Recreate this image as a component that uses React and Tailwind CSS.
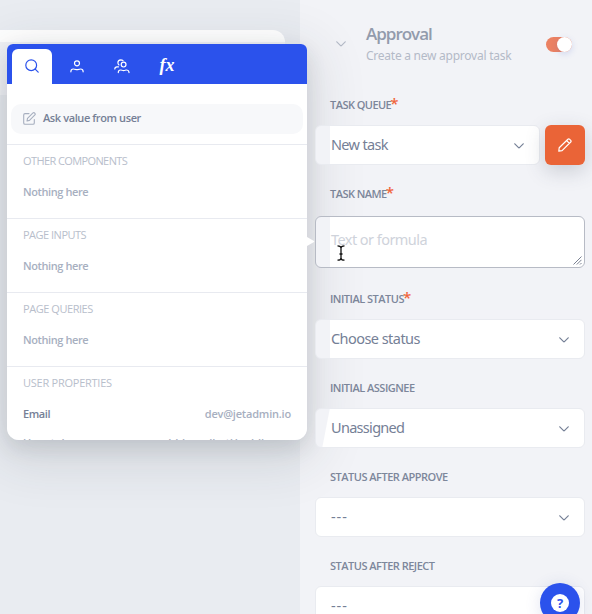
import React from 'react';

function Chevron({ className = '' }) {
  return (
    <svg className={className} width="10" height="6" viewBox="0 0 10 6" fill="none" stroke="currentColor" strokeWidth="1.2" strokeLinecap="round" strokeLinejoin="round">
      <path d="M.8.8 4.3 4.4Q5 5.1 5.7 4.4L9.2.8" />
    </svg>
  );
}

function Label({ children, required, className = '' }) {
  return (
    <div className={"ml-[15px] flex h-[18px] items-center whitespace-nowrap font-['Open_Sans',sans-serif] text-[11px] font-semibold text-[#7d879b] " + className}>
      {children}
      {required && <span className="-ml-px -mt-1 text-[15px] font-semibold leading-none tracking-normal text-[#f0653c]">*</span>}
    </div>
  );
}

const tinted = 'bg-[linear-gradient(to_right,#f2f3f7_14px,#ffffff_14px)]';

function Select({ children, fill = tinted, className = '' }) {
  return (
    <div className={'relative z-20 flex h-10 min-w-0 flex-1 items-center justify-between rounded-md border border-[#e9ebf0] pl-[15px] pr-[15px] text-[14.5px] text-[#758096] ' + fill}>
      <span className={'-mt-px whitespace-nowrap ' + className}>{children}</span>
      <Chevron className="mt-0.5" />
    </div>
  );
}

function Field({ label, labelClass, required, children }) {
  return (
    <div className="mb-5">
      <Label required={required} className={labelClass}>{label}</Label>
      <div className="mt-[11px] flex gap-[5px]">{children}</div>
    </div>
  );
}

function Group({ title, titleClass, children }) {
  return (
    <div className="h-[74px] shrink-0 border-t border-[#e8eaf0] px-4 pt-2">
      <div className={"h-4 whitespace-nowrap font-['Open_Sans',sans-serif] text-[11px] font-medium leading-4 text-[#b8becb] " + titleClass}>{title}</div>
      <div className="mt-[15px] flex h-4 items-center justify-between whitespace-nowrap font-['Open_Sans',sans-serif] text-[11px] font-semibold leading-4 tracking-[-0.4px] text-[#a7afbf]">
        {children}
      </div>
    </div>
  );
}

function Tabs() {
  return (
    <div className="flex h-10 shrink-0 items-end bg-[#2b52ec] pl-[5px] text-white">
      <div className="flex h-[35px] w-10 items-center justify-center rounded-t-md bg-white pb-0.5 text-[#2b52ec]">
        <svg width="14" height="14" viewBox="0 0 14 14" fill="none" stroke="currentColor" strokeWidth="1.2" strokeLinecap="round">
          <circle cx="6.2" cy="6.2" r="5.4" />
          <path d="m10.2 10.2 3 3" />
        </svg>
      </div>
      <div className="flex h-[35px] w-[50px] items-center justify-center">
        <svg width="14" height="13" viewBox="0 0 14 13" fill="none" stroke="currentColor" strokeWidth="1.2" strokeLinecap="round">
          <circle cx="7" cy="3.3" r="2.5" />
          <path d="M.9 11.8v-.5Q1.1 9 3.2 9 4.8 9 5.5 9.4q1.5.6 3 0Q9.2 9 10.8 9q2.1 0 2.3 2.3v.5" />
        </svg>
      </div>
      <div className="flex h-[35px] w-10 items-center justify-center">
        <svg width="16" height="15" viewBox="0 0 16 15" fill="none" stroke="currentColor" strokeWidth="1.2" strokeLinecap="round">
          <circle cx="9.6" cy="5.6" r="2.4" />
          <path d="M4.3 13.6v-.4q.2-2.2 2.1-2.2 1.2 0 1.8.3 1.4.5 2.8 0 .6-.3 1.8-.3 1.9 0 2.2 2.2v.4" />
          <path d="M9 1.7Q8.3.8 6.7.8 3.9 1 3.9 3.8q0 1.4 1.1 2.1M.8 10q.1-2.1 2.2-2.2h1.5" />
        </svg>
      </div>
      <div className="flex h-[35px] w-[50px] items-center justify-center pb-1 font-['Liberation_Serif',serif] text-[18px] font-bold italic leading-none">
        fx
      </div>
    </div>
  );
}

function Popover() {
  return (
    <div className="absolute left-[7px] top-11 z-10 h-[396px] w-[300px] rounded-b-xl rounded-t-md shadow-[0_12px_52px_10px_rgba(45,50,60,0.12),0_8px_20px_rgba(45,50,60,0.12)]">
      <div className="flex h-full flex-col overflow-hidden rounded-b-xl rounded-t-md bg-white">
        <Tabs />
        <div className="mx-1 mb-[10px] mt-5 flex h-[30px] shrink-0 items-center rounded-[10px] bg-[#f7f8fa] pb-px pl-3 font-['Open_Sans',sans-serif] text-[11px] font-semibold text-[#758096]">
          <svg width="13" height="13" viewBox="0 0 13 13" fill="none" stroke="#a7afbf" strokeWidth="1.1" strokeLinejoin="round" strokeLinecap="round">
            <path d="M6 1.6H2Q.7 1.6.7 3v8q0 1.3 1.3 1.3h8q1.3 0 1.3-1.3V7.5" />
            <path d="m4 9 .5-2.6L10 .9q.8-.6 1.6.1l.3.4q.7.8 0 1.5L6.5 8.4 4 9Z" />
          </svg>
          <span className="ml-[7px] whitespace-nowrap tracking-[-0.4px]">Ask value from user</span>
        </div>
        <Group title="OTHER COMPONENTS" titleClass="tracking-[-0.6px]">Nothing here</Group>
        <Group title="PAGE INPUTS" titleClass="tracking-[-0.5px]">Nothing here</Group>
        <Group title="PAGE QUERIES" titleClass="tracking-[-0.45px]">Nothing here</Group>
        <Group title="USER PROPERTIES" titleClass="tracking-[-0.25px]">
          <span className="text-[#758096]">Email</span>
          <span className="tracking-[-0.2px]">dev@jetadmin.io</span>
        </Group>
        <div className="-mt-[9px] flex h-4 shrink-0 justify-between whitespace-nowrap px-4 pt-1 font-['Open_Sans',sans-serif] text-[11px] font-semibold leading-4 text-[#a7afbf]">
          <span>User token</span>
          <span className="mr-4">a edddmn dbetHe ddhn</span>
        </div>
      </div>
      <svg className="absolute left-full top-[193px]" width="8" height="9" viewBox="0 0 8 9">
        <path d="M0 0 7 4Q7.6 4.5 7 5L0 9Z" fill="#fff" />
      </svg>
    </div>
  );
}

export default function App() {
  return (
    <div className="relative flex h-[614px] w-[592px] overflow-hidden bg-[#e9ecf1] font-['Noto_Sans','Open_Sans',sans-serif]">
      <div className="w-[300px] shrink-0 pt-[30px]">
        <div className="relative z-10 h-[65px] w-[285px] rounded-r-xl bg-[linear-gradient(to_bottom,#ffffff_12px,#f2f3f7_12px)]" />
      </div>

      <div className="w-[292px] shrink-0 bg-[#f2f3f7] pl-[15px] pr-[7px]">
        <div className="flex h-24 pt-[23px]">
          <Chevron className="ml-[21px] mt-[18px] text-[#b4bac7]" />
          <div className="ml-[20px] w-[180px] whitespace-nowrap">
            <div className="font-['Open_Sans',sans-serif] text-[17px] font-semibold leading-[21px] tracking-[-1px] text-[#929bac]">Approval</div>
            <div className="text-[12px] leading-[23px] tracking-[-0.25px] text-[#b4bac7]">Create a new approval task</div>
          </div>
          <div className="mt-[14px] flex h-[15px] w-[26px] justify-end rounded-full bg-[#eb8162]">
            <div className="size-[15px] rounded-full bg-white shadow-[0_2px_6px_rgba(60,90,200,0.18)]" />
          </div>
        </div>

        <Field label="TASK QUEUE" required labelClass="tracking-[-0.55px]">
          <Select className="tracking-[-0.65px]">New task</Select>
          <button className="relative z-20 flex size-10 shrink-0 items-center justify-center rounded-md bg-[#ea6437] text-white shadow-[0_6px_20px_rgba(60,70,90,0.22)]">
            <svg width="14" height="14" viewBox="0 0 14 14" fill="none" stroke="currentColor" strokeWidth="1.2" strokeLinejoin="round">
              <path d="m.8 13.2.4-3.4L9.9 1.2q.8-.7 1.6 0l1.2 1.2q.8.8 0 1.6L4.1 12.7.8 13.2ZM8.6 2.5l2.8 2.8" />
            </svg>
          </button>
        </Field>

        <div className="mb-[22px]">
          <Label required className="tracking-[-0.55px]">TASK NAME</Label>
          <div className={'relative z-20 mt-[13px] h-[52px] rounded-md border border-[#b7bbc5] pl-[15px] pt-[10px] text-[14.5px] leading-6 tracking-[-0.55px] text-[#cfd3db] ' + tinted}>
            Text or formula
            <svg className="absolute bottom-0.5 right-0.5" width="9" height="9" viewBox="0 0 9 9" stroke="#7a8192" strokeWidth="1">
              <path d="M.5 8.5l8-8M3.8 8.5l4.7-4.7M7 8.5 8.5 7" />
            </svg>
            <svg className="absolute left-[21px] top-[28px]" width="8" height="16" viewBox="0 0 8 16" fill="none" stroke="#111" strokeWidth="1.3">
              <path d="M.5.8Q4 .8 4 3v10q0 2.2-3.5 2.2M7.5.8Q4 .8 4 3M7.5 15.2Q4 15.2 4 13M2.5 9h3" />
            </svg>
          </div>
        </div>

        <Field label="INITIAL STATUS" required labelClass="tracking-[-0.5px]">
          <Select className="tracking-[-0.55px]">Choose status</Select>
        </Field>
        <Field label="INITIAL ASSIGNEE" labelClass="tracking-[-0.5px]">
          <Select className="tracking-[-0.7px]" fill="bg-[linear-gradient(101deg,#f2f3f7_13px,#ffffff_14px)]">Unassigned</Select>
        </Field>
        <Field label="STATUS AFTER APPROVE" labelClass="tracking-[-0.5px]">
          <Select fill="bg-white" className="tracking-[0.9px]">---</Select>
        </Field>
        <Field label="STATUS AFTER REJECT" labelClass="tracking-[-0.5px]">
          <Select fill="bg-white" className="tracking-[0.9px]">---</Select>
        </Field>
      </div>

      <Popover />

      <div className="absolute left-[540px] top-[583px] z-30 flex size-10 items-center justify-center rounded-full bg-[#2b52ec] shadow-[0_2px_16px_rgba(60,80,160,0.16)]">
        <div className="flex size-[18px] items-center justify-center rounded-full bg-white text-[13px] font-bold leading-none text-[#2b52ec]">?</div>
      </div>
    </div>
  );
}
